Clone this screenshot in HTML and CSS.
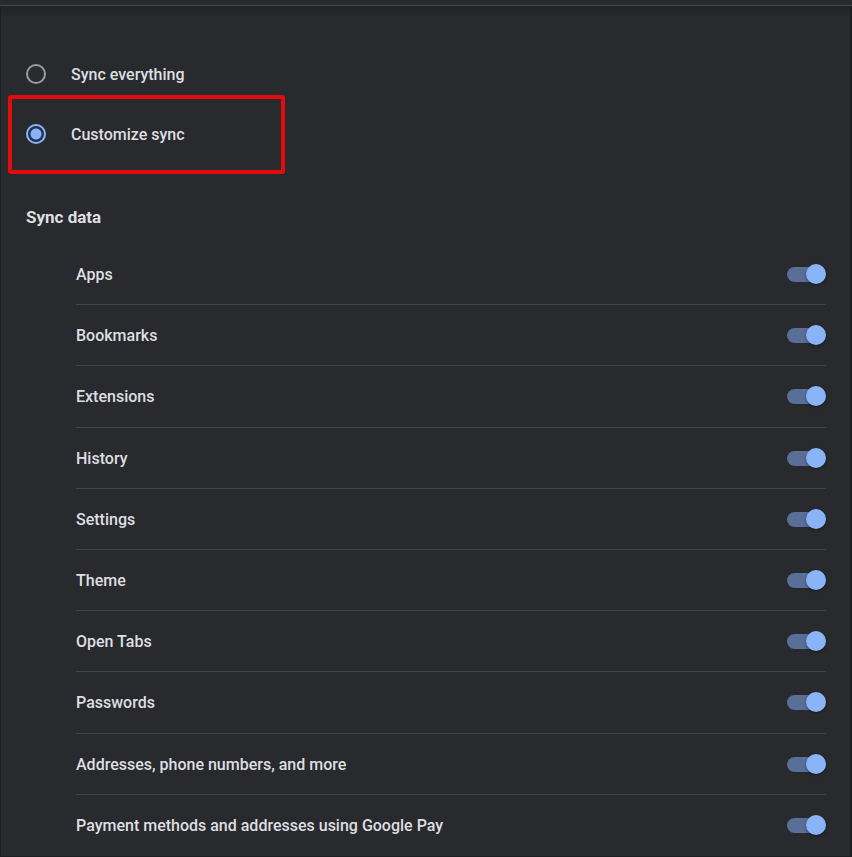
FILE: index.html
```html
<!DOCTYPE html>
<html lang="en">
<head>
    <meta charset="UTF-8">
    <meta name="viewport" content="width=device-width, initial-scale=1.0">
    <title>Sync settings</title>
    <link rel="stylesheet" href="styles.css">
</head>
<body>
    <header class="toolbar"></header>
    <main class="card">
        <div class="options">
            <label class="option">
                <input type="radio" class="radio" name="sync">
                <span class="text">Sync everything</span>
            </label>
            <label class="option highlight">
                <input type="radio" class="radio" name="sync" checked>
                <span class="text">Customize sync</span>
            </label>
        </div>
        <h2>Sync data</h2>
        <ul class="sync-list">
            <li><label class="text" for="apps">Apps</label><input type="checkbox" class="toggle" id="apps" checked></li>
            <li><label class="text" for="bookmarks">Bookmarks</label><input type="checkbox" class="toggle" id="bookmarks" checked></li>
            <li><label class="text" for="extensions">Extensions</label><input type="checkbox" class="toggle" id="extensions" checked></li>
            <li><label class="text" for="history">History</label><input type="checkbox" class="toggle" id="history" checked></li>
            <li><label class="text" for="settings">Settings</label><input type="checkbox" class="toggle" id="settings" checked></li>
            <li><label class="text" for="theme">Theme</label><input type="checkbox" class="toggle" id="theme" checked></li>
            <li><label class="text" for="tabs">Open Tabs</label><input type="checkbox" class="toggle" id="tabs" checked></li>
            <li><label class="text" for="passwords">Passwords</label><input type="checkbox" class="toggle" id="passwords" checked></li>
            <li><label class="text" for="addresses">Addresses, phone numbers, and more</label><input type="checkbox" class="toggle" id="addresses" checked></li>
            <li><label class="text" for="payment">Payment methods and addresses using Google Pay</label><input type="checkbox" class="toggle" id="payment" checked></li>
        </ul>
    </main>
</body>
</html>
```
FILE: styles.css
```css
*, *::before, *::after {
    box-sizing: border-box;
}
body {
    margin: 0;
    min-height: 100vh;
    display: flex;
    flex-direction: column;
    background-color: #292a2d;
    color: #dedfe2;
    font-family: Roboto, sans-serif;
    font-size: 16px;
    font-weight: 500;
    line-height: 20px;
}
.toolbar {
    height: 6px;
    border-bottom: 1px solid #48494c;
}
.card {
    flex: 1;
    display: flex;
    flex-direction: column;
    padding: 38px 24px 0 25px;
    border: solid #1d1e20;
    border-width: 0 2px 1px 1px;
    background: linear-gradient(#222326, #292a2d 12px);
}
.text {
    padding-top: 2px;
}
.option {
    position: relative;
    display: flex;
    align-items: center;
    gap: 25px;
    height: 60px;
}
.radio {
    appearance: none;
    width: 20px;
    height: 20px;
    margin: 0;
    border: 2px solid #9a9b9e;
    border-radius: 50%;
}
.radio:checked {
    border-color: #8ab4f8;
    background: radial-gradient(circle, #8ab4f8 5px, #20324d 6px);
}
/* red frame around the chosen option */
.highlight::after {
    content: "";
    position: absolute;
    top: -9px;
    bottom: -10px;
    left: -18px;
    width: 277px;
    border: 4px solid #e30b0b;
    border-radius: 3px;
}
h2 {
    margin: 43px 0 17px;
    font-size: 17px;
    font-weight: 700;
    line-height: 20px;
}
.sync-list {
    flex: 1;
    display: grid;
    grid-auto-rows: minmax(60px, 1fr);
    margin: 0;
    padding: 0 0 0 50px;
    list-style: none;
}
.sync-list li {
    display: flex;
    align-items: center;
    justify-content: space-between;
    border-bottom: 1px solid #434447;
}
.sync-list li:last-child {
    border-bottom-color: transparent;
}
.toggle {
    appearance: none;
    position: relative;
    width: 39px;
    height: 20px;
    margin: 0;
}
.toggle::before {
    content: "";
    position: absolute;
    top: 3px;
    left: 0;
    width: 34px;
    height: 15px;
    border-radius: 8px;
    background-color: #9aa0a6;
}
.toggle::after {
    content: "";
    position: absolute;
    top: 0;
    left: 0;
    width: 20px;
    height: 20px;
    border-radius: 50%;
    background-color: #dadce0;
    box-shadow: 0 1px 3px rgba(0, 0, 0, 0.4);
}
.toggle:checked::before {
    background-color: #5a6f98;
}
.toggle:checked::after {
    left: 19px;
    background-color: #8ab4f8;
}
```
